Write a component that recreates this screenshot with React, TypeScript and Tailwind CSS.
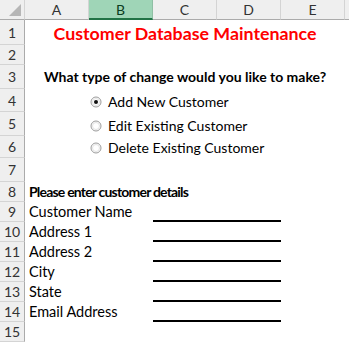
import React from 'react';

const cols = ['A', 'B', 'C', 'D', 'E'];

const rowHeights: { [key: number]: string } = {
  1: 'h-[25px]',
  2: 'h-[20px]',
  3: 'h-[24px]',
  4: 'h-[23px]',
  5: 'h-[24px]',
  6: 'h-[22px]',
  7: 'h-[24px]',
};

function Radio({ checked }: { checked?: boolean }) {
  return (
    <svg width="12" height="12" viewBox="0 0 12 12" className="shrink-0">
      <circle cx="6" cy="6" r="5" fill="#fff" stroke="#9a9a9a" strokeWidth="1" />
      <circle cx="6" cy="6" r="3.5" fill="none" stroke="#e2e2e2" strokeWidth="1" />
      {checked && <circle cx="6" cy="6" r="2" fill="#111" />}
    </svg>
  );
}

function Row({ n, children }: { n: number; children?: React.ReactNode }) {
  return (
    <div className={`flex ${rowHeights[n] || 'h-[20px]'}`}>
      <div className="w-[25px] shrink-0 bg-[#efefef] border-r border-r-[#ababab] border-b border-b-[#d4d4d4] flex items-center justify-center text-[14px] text-[#333]">
        {n}
      </div>
      <div className="flex-1 flex items-end pb-[1px] min-w-0">{children}</div>
    </div>
  );
}

function FieldRow({ n, label }: { n: number; label: string }) {
  return (
    <Row n={n}>
      <div className="w-[128px] pl-[4px] text-[14.5px] leading-[18px] text-black whitespace-nowrap">{label}</div>
      <div className="w-[128px] h-[20px] -mb-[1px] border-b-2 border-black" />
    </Row>
  );
}

function Option({ n, label, checked }: { n: number; label: string; checked?: boolean }) {
  return (
    <Row n={n}>
      <div className="flex items-center gap-[6px] pl-[65px] text-[14px] leading-[18px] whitespace-nowrap">
        <Radio checked={checked} />
        <span>{label}</span>
      </div>
    </Row>
  );
}

export default function App() {
  return (
    <div className="w-[349px] h-[343px] bg-white overflow-hidden font-['Lato','Liberation_Sans',sans-serif] text-black">
      {/* column headers */}
      <div className="flex h-[20px]">
        <div className="relative w-[25px] shrink-0 bg-[#efefef] border-r border-r-[#d4d4d4] border-b border-b-[#ababab]">
          <div className="absolute right-[3px] bottom-[3px] w-0 h-0 border-l-[12px] border-l-transparent border-b-[12px] border-b-[#b6b6b6]" />
        </div>
        {cols.map((c) => (
          <div
            key={c}
            className={`w-[64px] shrink-0 flex items-center justify-center text-[14px] border-r ${
              c === 'B'
                ? 'bg-[#9fd5b7] border-r-[#8fbfa4] border-b-2 border-b-[#217346] text-[#0b3b20]'
                : 'bg-[#efefef] border-r-[#d4d4d4] border-b border-b-[#ababab] text-[#333]'
            }`}
          >
            {c}
          </div>
        ))}
        <div className="flex-1 bg-[#efefef] border-b border-b-[#ababab]" />
      </div>

      <Row n={1}>
        <div className="w-[320px] flex justify-center pb-[1px] text-[17.8px] leading-[20px] font-bold text-[#ff0000] whitespace-nowrap">
          Customer Database Maintenance
        </div>
      </Row>
      <Row n={2} />
      <Row n={3}>
        <div className="w-[320px] flex justify-center pb-[2px] text-[14px] leading-[18px] font-bold whitespace-nowrap">
          What type of change would you like to make?
        </div>
      </Row>
      <Option n={4} label="Add New Customer" checked />
      <Option n={5} label="Edit Existing Customer" />
      <Option n={6} label="Delete Existing Customer" />
      <Row n={7} />
      <Row n={8}>
        <div className="pl-[4px] text-[14px] tracking-[-0.8px] leading-[18px] font-bold whitespace-nowrap">
          Please enter customer details
        </div>
      </Row>
      <FieldRow n={9} label="Customer Name" />
      <FieldRow n={10} label="Address 1" />
      <FieldRow n={11} label="Address 2" />
      <FieldRow n={12} label="City" />
      <FieldRow n={13} label="State" />
      <FieldRow n={14} label="Email Address" />
      <Row n={15} />
    </div>
  );
}
